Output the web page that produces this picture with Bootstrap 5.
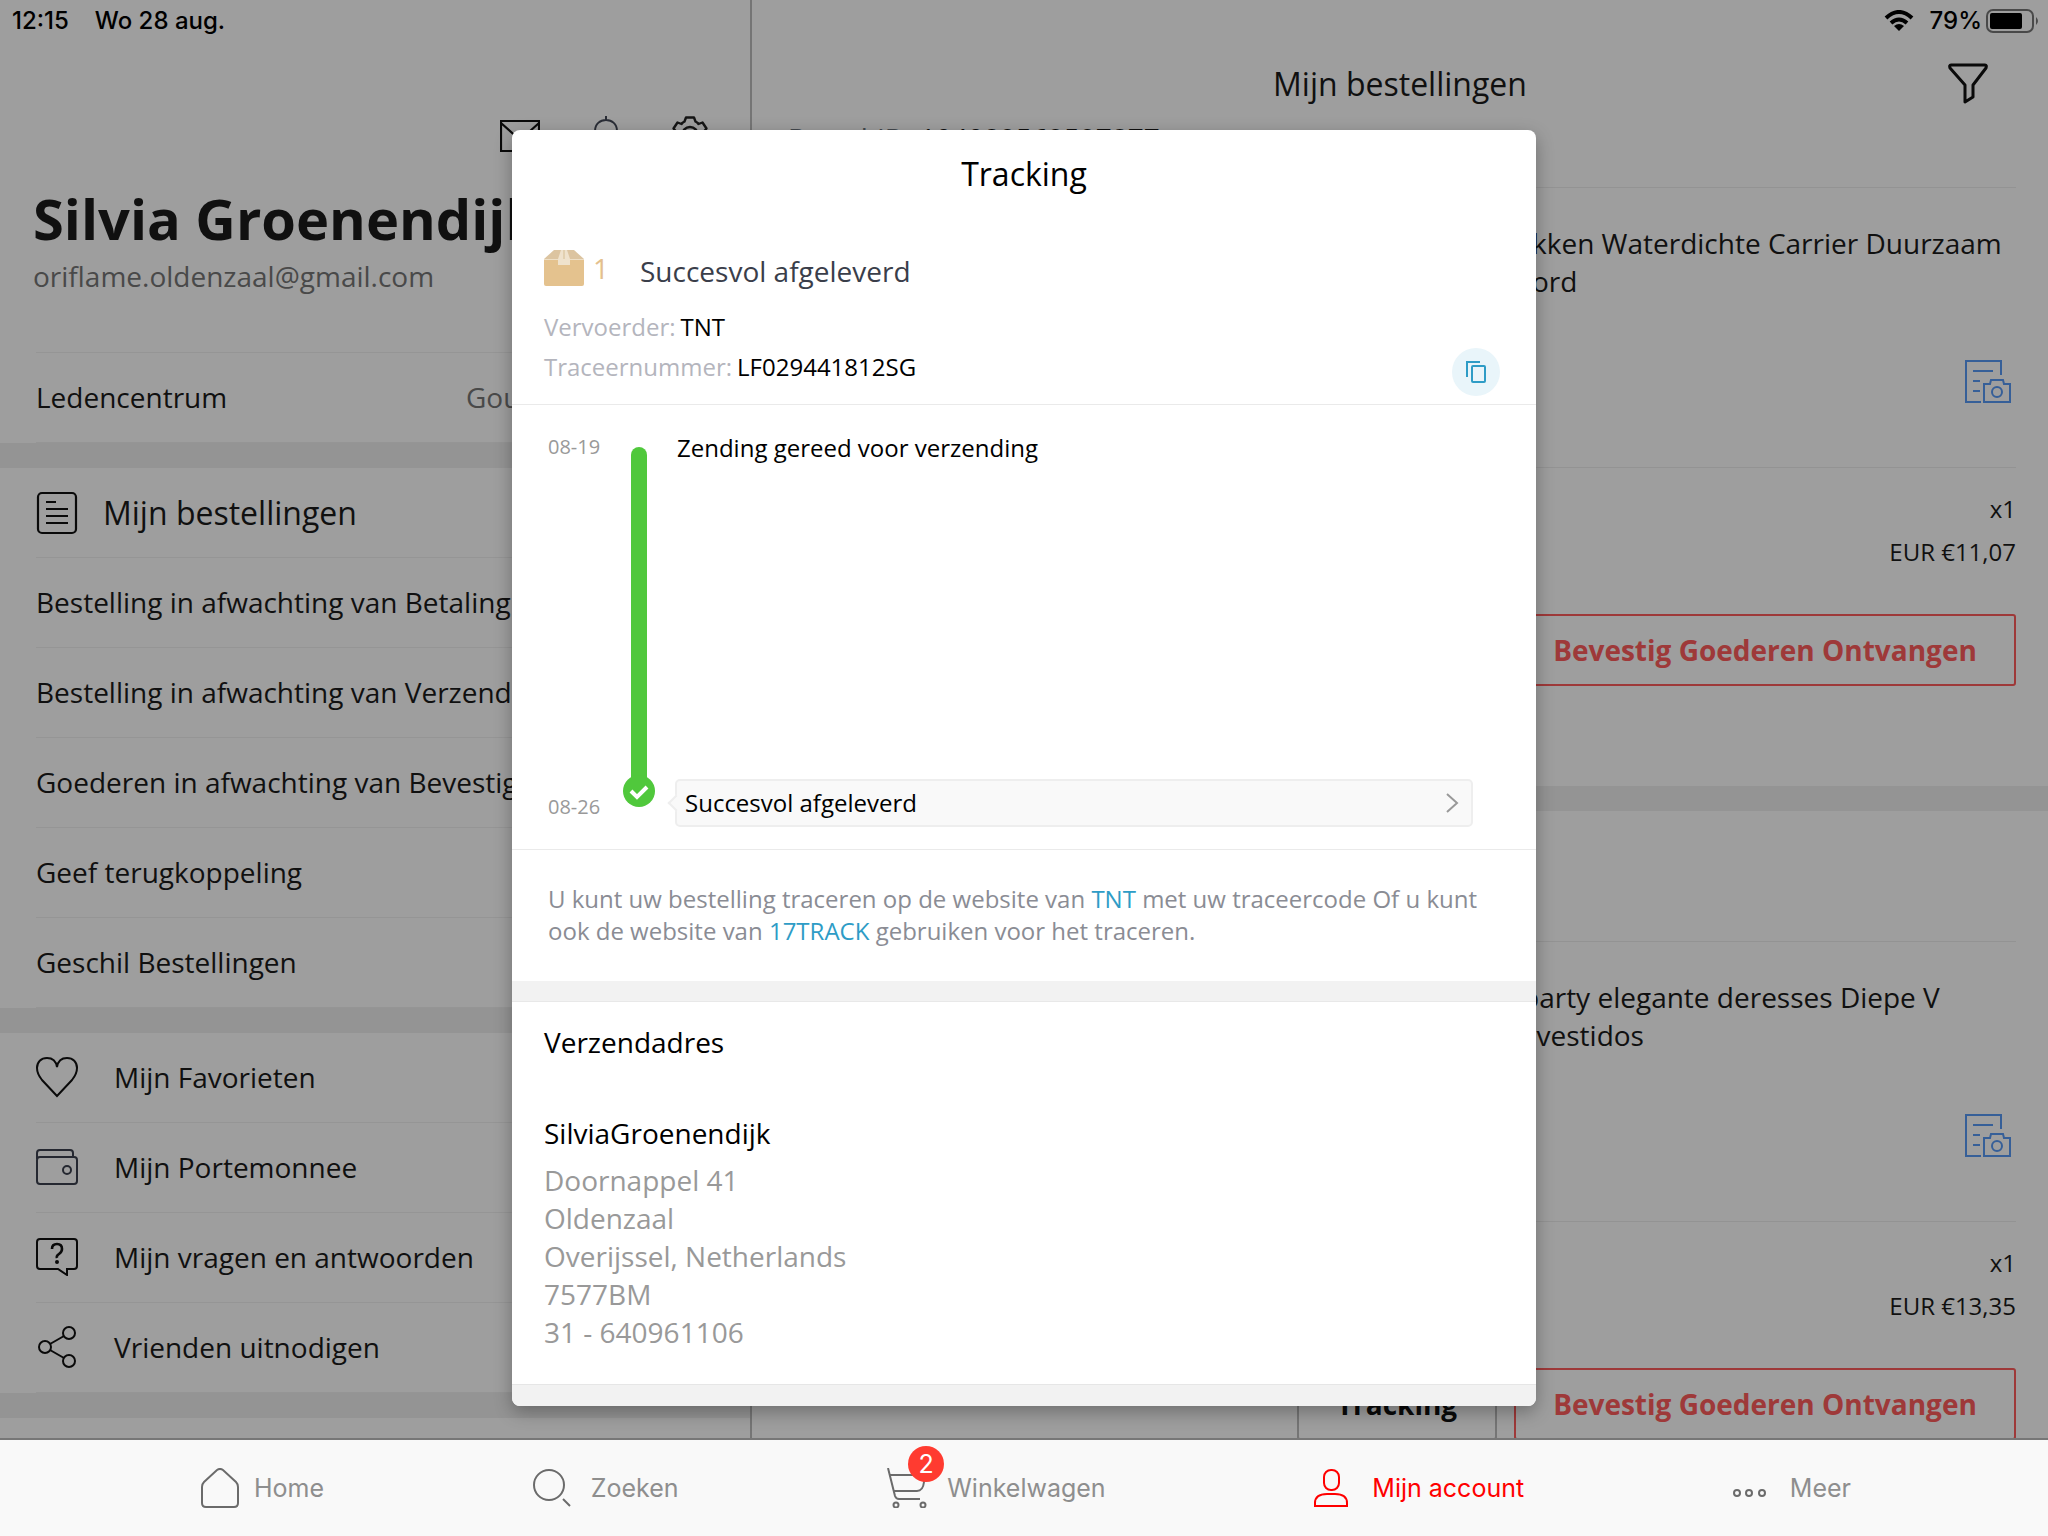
<!DOCTYPE html>
<html lang="nl">
<head>
<meta charset="utf-8">
<meta name="viewport" content="width=device-width, initial-scale=1">
<title>Mijn account – Tracking</title>
<link href="https://cdn.jsdelivr.net/npm/bootstrap@5.3.0/dist/css/bootstrap.min.css" rel="stylesheet">
<style>
  body { font-family: "Open Sans", "Noto Sans", sans-serif; font-size: 28px; line-height: 38px; color: #1b1b1b; background: #fff; }
  a { color: inherit; text-decoration: none; }
  svg { fill: none; flex: none; display: block; }
  .ui-font { font-family: Inter, Roboto, sans-serif; }
  .statusbar { font-size: 24px; line-height: 32px; padding: 5px 8px 0 12px; font-weight: 500; color: #000; }
  .clock { margin-right: 26px; }
  .stage { min-height: 0; flex: 1 1 0; }
  .pane-left { flex: 0 0 752px; border-right: 2px solid #bdbdbd; }
  .pane-right { min-width: 0; }
  .tools { height: 80px; margin-top: 96px; padding: 0 42px 0 36px; gap: 52px; }
  .person { font-size: 56px; line-height: 76px; margin: 4px 0 0; padding-left: 33px; font-weight: 700; }
  .mail { padding: 1px 33px 0; color: #777; }
  .rows { padding: 0 36px; }
  .row-line { height: 90px; border-bottom: 1px solid #f1f1f1; padding-bottom: 2px; }
  .row-line.top-line { height: 91px; border-top: 1px solid #f1f1f1; margin-top: 57px; }
  .row-text { padding-left: 36px; }
  .band { height: 25px; background: #efefef; }
  .fs-head { font-size: 32px; line-height: 44px; font-weight: 400; }
  .row-line.fs-head { padding-bottom: 0; }
  .level { width: 248px; color: #777; }
  .nav-head { height: 119px; padding: 62px 0 0; position: relative; }
  .filter-btn { position: absolute; right: 60px; top: 62px; padding: 0; border: 0; background: none; }
  .order-id { margin: 0 32px; height: 69px; border-bottom: 1px solid #eee; padding-left: 4px; }
  .order-id.tall { height: 131px; padding-top: 61px; }
  .item { margin: 0 32px; height: 280px; border-bottom: 1px solid #eee; padding: 36px 0 0; position: relative; }
  .thumb { flex: 0 0 748px; }
  .thumb.slim { flex-basis: 738px; }
  .item-doc { position: absolute; right: 5px; bottom: 64px; }
  .sums { padding: 19px 32px 0; font-size: 24px; line-height: 43px; }
  .actions { padding: 41px 32px 0; gap: 17px; height: 213px; }
  .act { height: 72px; border: 2px solid #bdbdbd; border-radius: 3px; background: #fff; font-weight: 700; color: #111; width: 200px; padding: 0; }
  .act.main-act { width: 502px; border-color: #ff5c5c; color: #ff5c5c; }
  .dim { position: absolute; inset: 0; background: rgba(0,0,0,.38); padding-top: 130px; z-index: 5; }
  .sheet { width: 50%; min-width: 700px; height: 1276px; background: #fff; border-radius: 8px; overflow: hidden; color: #000; box-shadow: 0 6px 18px rgba(0,0,0,.3); }
  .sheet h2 { margin: 0; padding-top: 22px; height: 114px; text-align: center; }
  .sheet .parcel { padding: 0 36px 0 32px; height: 161px; border-bottom: 1px solid #eaeaea; position: relative; }
  .box-art { margin-top: 6px; }
  .pk-num { color: #e4c08d; margin: 0 31px 0 9px; line-height: 48px; }
  .pk-state { color: #3a3e4a; line-height: 54px; }
  .meta { font-size: 24px; line-height: 40px; padding-top: 9px; }
  .meta dt { font-weight: 400; color: #b4b5bd; }
  .meta dd { margin: 0 0 0 5px; }
  .copy-btn { position: absolute; right: 36px; bottom: 8px; width: 48px; height: 48px; border: 0; border-radius: 50%; background: #e9f5fa; padding: 0; }
  .timeline { height: 445px; padding: 27px 63px 22px 36px; border-bottom: 1px solid #eaeaea; font-size: 24px; line-height: 32px; }
  .t-dates { width: 75px; font-size: 20px; line-height: 28px; color: #999; padding: 1px 0 6px; }
  .t-track { width: 32px; padding: 15px 0 20px; }
  .t-bar { width: 16px; background: #50c83c; border-radius: 8px 8px 0 0; margin-bottom: -4px; }
  .t-body { padding-left: 20px; }
  .t-first { padding-left: 2px; }
  .t-last { height: 48px; border: 2px solid #eee; border-radius: 5px; background: #f9f9f9; padding: 0 12px 0 8px; position: relative; }
  .t-last::before { content: ""; position: absolute; left: -7px; top: 16px; width: 12px; height: 12px; border: 2px solid #eee; border-width: 0 0 2px 2px; background: #f9f9f9; transform: rotate(45deg); }
  .hint { margin: 0; height: 131px; padding: 33px 40px 0 36px; font-size: 24px; line-height: 32px; color: #8a8c94; }
  .hint a { color: #2e9cc6; }
  .gap-band { height: 21px; background: #f2f2f2; border-bottom: 1px solid #e8e8e8; }
  .address { padding: 21px 32px 0; height: 382px; }
  .address h3 { font-size: 28px; line-height: 38px; font-weight: 400; margin: 0 0 53px; }
  .address .who { margin-bottom: 9px; }
  .address address { color: #999; margin: 0; }
  .end-band { height: 22px; background: #f2f2f2; border-top: 1px solid #e6e6e6; }
  .tabs { flex: 0 0 98px; border-top: 2px solid #777; background: #f9f9f9; font-size: 25px; line-height: 32px; color: #8e8e8e; padding: 0 197px 0 201px; }
  .tabs a { gap: 20px; }
  .tabs a.near { gap: 15px; }
  .tabs a.far { gap: 24px; }
  .tabs .active { color: #ff0000; }
  .cart { position: relative; }
  .cart-count { position: absolute; left: 21px; top: -22px; width: 36px; height: 36px; border-radius: 50%; background: #ff3b30; color: #fff; font-size: 25px; line-height: 36px; text-align: center; }
</style>
</head>
<body>
<div class="d-flex flex-column vh-100 overflow-hidden">
  <div class="stage position-relative overflow-hidden">
    <div class="d-flex h-100">
      <aside class="pane-left">
        <div class="tools d-flex justify-content-end align-items-center">
          <svg width="40" height="32" viewBox="0 0 40 32" stroke="#111" stroke-width="2.2"><path d="M1 1h38v30H1zM1 3l19 17L39 3"/></svg>
          <svg width="28" height="42" viewBox="0 0 28 42" stroke="#444a58" stroke-width="2"><path d="M14 1v5M1 36h26M3 36V16C3 9 8 5 14 5s11 4 11 11v20M10 40h8"/></svg>
          <svg width="36" height="40" viewBox="0 0 36 40" stroke="#222" stroke-width="2.4" stroke-linejoin="round"><path d="M14 1.500h8l1.500 4q2 1 3 2.500l4-1.500 4 6-2.500 3q1 3.500 0 7l2.500 3-4 6-4-1.500q-1 1.500-3 2.500l-1.500 5h-8l-1.500-5q-2-1-3-2.500l-4 1.500-4-6 2.500-3q-1-3.500 0-7l-2.500-3 4-6 4 1.500q1-1.500 3-2.500z"/><circle cx="18" cy="19" r="8"/></svg>
        </div>
        <h1 class="person text-nowrap">Silvia Groenendijk</h1>
        <div class="mail">oriflame.oldenzaal@gmail.com</div>
        <div class="rows">
          <a href="#" class="row-line top-line d-flex align-items-center justify-content-between">Ledencentrum <span class="level">Gouden lid</span></a>
        </div>
        <div class="band"></div>
        <nav class="rows">
          <a href="#" class="row-line d-flex align-items-center fs-head">
            <svg class="me-4" width="43" height="44" viewBox="0 0 43 44" stroke="#111" stroke-width="2.200"><rect x="2" y="2" width="38" height="40" rx="4"/><path d="M10 11h10M10 18h22M10 25h22M10 32h22"/></svg>Mijn bestellingen</a>
          <a href="#" class="row-line d-flex align-items-center">Bestelling in afwachting van Betaling</a>
          <a href="#" class="row-line d-flex align-items-center">Bestelling in afwachting van Verzending</a>
          <a href="#" class="row-line d-flex align-items-center">Goederen in afwachting van Bevestiging</a>
          <a href="#" class="row-line d-flex align-items-center">Geef terugkoppeling</a>
          <a href="#" class="row-line d-flex align-items-center">Geschil Bestellingen</a>
        </nav>
        <div class="band"></div>
        <nav class="rows">
          <a href="#" class="row-line d-flex align-items-center">
            <svg width="42" height="42" viewBox="0 0 42 42" stroke="#111" stroke-width="2"><path d="M21 40L6 24C2 19 1 16 1 12 1 6 5 2 11 2c5 0 9 3 10 9 1-6 5-9 10-9 6 0 10 4 10 10 0 4-1 7-5 12z"/></svg><span class="row-text">Mijn Favorieten</span></a>
          <a href="#" class="row-line d-flex align-items-center">
            <svg width="42" height="36" viewBox="0 0 42 36" stroke="#3c4250" stroke-width="2"><rect x="1" y="8" width="40" height="27" rx="3"/><path d="M1 10V4q0-3 3-3h30q3 0 3 3v4"/><circle cx="31" cy="21" r="4"/></svg><span class="row-text">Mijn Portemonnee</span></a>
          <a href="#" class="row-line d-flex align-items-center">
            <svg width="42" height="38" viewBox="0 0 42 38" stroke="#111" stroke-width="2"><path d="M22 31H4q-3 0-3-3V4q0-3 3-3h34q3 0 3 3v24q0 3-3 3h-7v6z"/><path d="M16 11q0-5 5-5t5 5q0 3-3 5t-2 4" stroke-width="2.600"/><circle cx="21" cy="24" r="1" fill="#111"/></svg><span class="row-text">Mijn vragen en antwoorden</span></a>
          <a href="#" class="row-line d-flex align-items-center">
            <svg width="42" height="42" viewBox="0 0 42 42" stroke="#111" stroke-width="2"><circle cx="9" cy="21" r="6"/><circle cx="33" cy="7" r="6"/><circle cx="33" cy="35" r="6"/><path d="M14 18l14-8M14 24l14 8"/></svg><span class="row-text">Vrienden uitnodigen</span></a>
        </nav>
        <div class="band"></div>
      </aside>
      <main class="pane-right flex-fill">
        <div class="nav-head">
          <h2 class="fs-head text-center m-0">Mijn bestellingen</h2>
          <button class="filter-btn" type="button" aria-label="Filter"><svg width="40" height="42" viewBox="0 0 40 42" stroke="#111" stroke-width="3" stroke-linejoin="round"><path d="M3 3h34q2 0 1 3L25 23v12l-8 5V23L2 6Q1 3 3 3z"/></svg></button>
        </div>
        <div class="order-id"><span class="text-secondary">Bestel-ID:</span> 104089569597877</div>
        <article>
          <div class="item d-flex">
            <div class="thumb"></div>
            <div class="text-nowrap">kken Waterdichte Carrier Duurzaam<br>ord</div>
            <svg class="item-doc" width="46" height="43" viewBox="0 0 46 43" stroke="#5799f5" stroke-width="2"><path d="M36 15V1H1v41h15M8 11h20M8 21h7M8 31h7"/><path d="M19 24h6l1-4h12l1 4h6v18H19z"/><circle cx="32" cy="32" r="5"/></svg>
          </div>
          <div class="sums text-end"><div>x1</div><div>EUR €11,07</div></div>
          <div class="actions d-flex justify-content-end"><button class="act" type="button">Tracking</button><button class="act main-act" type="button">Bevestig Goederen Ontvangen</button></div>
        </article>
        <div class="band"></div>
        <div class="order-id tall"><span class="text-secondary">Bestel-ID:</span></div>
        <article>
          <div class="item d-flex">
            <div class="thumb slim"></div>
            <div class="text-nowrap">party elegante deresses Diepe V<br>&nbsp;&nbsp;vestidos</div>
            <svg class="item-doc" width="46" height="43" viewBox="0 0 46 43" stroke="#5799f5" stroke-width="2"><path d="M36 15V1H1v41h15M8 11h20M8 21h7M8 31h7"/><path d="M19 24h6l1-4h12l1 4h6v18H19z"/><circle cx="32" cy="32" r="5"/></svg>
          </div>
          <div class="sums text-end"><div>x1</div><div>EUR €13,35</div></div>
          <div class="actions d-flex justify-content-end"><button class="act" type="button">Tracking</button><button class="act main-act" type="button">Bevestig Goederen Ontvangen</button></div>
        </article>
      </main>
    </div>

    <header class="statusbar ui-font position-absolute top-0 start-0 w-100 d-flex justify-content-between">
      <div><span class="clock">12:15</span>Wo 28 aug.</div>
      <div class="d-flex align-items-center">
        <svg width="30" height="22" viewBox="0 0 30 22" fill="none" stroke="#000" stroke-width="4"><path d="M2 8Q15-4 28 8M7 13q8-7 16 0"/><path d="M15 21l-5-5q5-4 10 0z" fill="#000" stroke="none"/></svg>
        <span class="ms-3 me-1">79%</span>
        <svg width="54" height="24" viewBox="0 0 54 24"><rect x="1" y="1" width="46" height="22" rx="6" stroke="#777" stroke-width="2"/><rect x="4" y="4" width="32" height="16" rx="2" fill="#000"/><path d="M50 8q4 4 0 8z" fill="#777"/></svg>
      </div>
    </header>

    <div class="dim d-flex justify-content-center align-items-start">
      <section class="sheet" role="dialog" aria-labelledby="trk">
        <h2 id="trk" class="fs-head">Tracking</h2>
        <div class="parcel">
          <div class="d-flex align-items-start">
            <svg class="box-art" width="40" height="36" viewBox="0 0 40 36"><path d="M10 0h20l10 9H0z" fill="#dcc4a0"/><path d="M0 10h40v24q0 2-2 2H2q-2 0-2-2z" fill="#e4c28e"/><path d="M0 9h40v1H0z" fill="#eedfc6"/><path d="M17 0h6l3 9v6H14V9z" fill="#efe2cc"/><path d="M19 0h2v9h-2z" fill="#e2d0b0"/></svg>
            <span class="pk-num">1</span>
            <span class="pk-state">Succesvol afgeleverd</span>
          </div>
          <dl class="meta m-0">
            <div class="d-flex"><dt>Vervoerder:</dt><dd>TNT</dd></div>
            <div class="d-flex"><dt>Traceernummer:</dt><dd>LF029441812SG</dd></div>
          </dl>
          <button class="copy-btn d-flex align-items-center justify-content-center" type="button" aria-label="Kopieer"><svg width="20" height="22" viewBox="0 0 20 22" stroke="#2e9cc6" stroke-width="2"><path d="M14 1H1v15"/><rect x="6" y="5" width="13" height="16" rx="1"/></svg></button>
        </div>
        <div class="timeline d-flex">
          <div class="t-dates d-flex flex-column justify-content-between"><span>08-19</span><span>08-26</span></div>
          <div class="t-track d-flex flex-column align-items-center">
            <div class="t-bar flex-fill"></div>
            <svg width="32" height="32" viewBox="0 0 32 32"><circle cx="16" cy="16" r="16" fill="#50c83c"/><path d="M8 16l6 6 10-10" stroke="#fff" stroke-width="4"/></svg>
          </div>
          <div class="t-body flex-fill d-flex flex-column justify-content-between">
            <div class="t-first">Zending gereed voor verzending</div>
            <a href="#" class="t-last d-flex align-items-center justify-content-between">Succesvol afgeleverd
              <svg width="14" height="22" viewBox="0 0 14 22" stroke="#999" stroke-width="2"><path d="M2 2l10 9-10 9"/></svg></a>
          </div>
        </div>
        <p class="hint">U kunt uw bestelling traceren op de website van <a href="#">TNT</a> met uw traceercode Of u kunt ook de website van <a href="#">17TRACK</a> gebruiken voor het traceren.</p>
        <div class="gap-band"></div>
        <div class="address">
          <h3>Verzendadres</h3>
          <div class="who">SilviaGroenendijk</div>
          <address>Doornappel 41<br>Oldenzaal<br>Overijssel, Netherlands<br>7577BM<br>31 - 640961106</address>
        </div>
        <div class="end-band"></div>
      </section>
    </div>
  </div>

  <nav class="tabs ui-font d-flex align-items-center justify-content-between">
    <a href="#" class="d-flex align-items-center near"><svg width="38" height="40" viewBox="0 0 38 40" stroke="#6b6b6b" stroke-width="2"><path d="M1 19q0-3 2-5L16 2q3-2 6 0l13 12q2 2 2 5v16q0 4-4 4H5q-4 0-4-4z"/></svg>Home</a>
    <a href="#" class="d-flex align-items-center"><svg width="38" height="38" viewBox="0 0 38 38" stroke="#6b6b6b" stroke-width="2"><circle cx="16" cy="16" r="15"/><path d="M30 30l7 7"/></svg>Zoeken</a>
    <a href="#" class="d-flex align-items-center cart"><svg width="40" height="40" viewBox="0 0 40 40" stroke="#6b6b6b" stroke-width="2"><path d="M1 0l7 28q1 3 4 3h21M3 7h34v7q-1 9-7 9H7"/><circle cx="9" cy="37" r="2.500"/><circle cx="36" cy="37" r="2.500"/></svg>Winkelwagen<span class="cart-count">2</span></a>
    <a href="#" class="d-flex align-items-center active far"><svg width="34" height="38" viewBox="0 0 34 38" stroke="#f00" stroke-width="2"><rect x="10" y="1" width="15" height="20" rx="7"/><path d="M1 37v-3q0-9 12-9h8q12 0 12 9v3z"/></svg>Mijn account</a>
    <a href="#" class="d-flex align-items-center far"><svg width="33" height="18" viewBox="0 0 33 18" stroke="#6b6b6b" stroke-width="2"><circle cx="4" cy="14" r="3"/><circle cx="16" cy="14" r="3"/><circle cx="29" cy="14" r="3"/></svg>Meer</a>
  </nav>
</div>
<script src="https://cdn.jsdelivr.net/npm/bootstrap@5.3.0/dist/js/bootstrap.bundle.min.js"></script>
</body>
</html>
